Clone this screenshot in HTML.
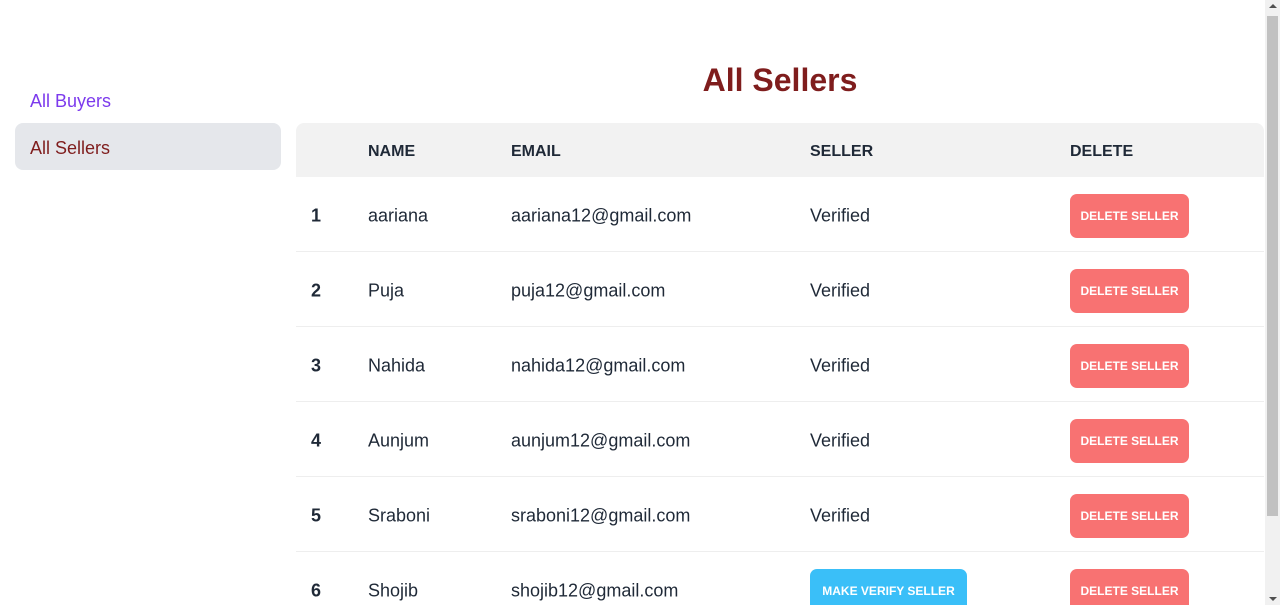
<!DOCTYPE html>
<html><head><style>
*{box-sizing:border-box;margin:0;padding:0}
html,body{width:1280px;height:605px;overflow:hidden}
body{background:#fff;font-family:"Liberation Sans",sans-serif;position:relative;color:#1f2937}
.sb{position:absolute;right:0;top:0;width:15px;height:605px;background:#f1f1f1}
.sb .th{position:absolute;left:2px;top:16px;width:11px;height:500px;background:#c1c1c1}
.sb .up{position:absolute;top:4px;left:4px;border:4px solid transparent;border-bottom:4px solid #505050;border-top:0}
.sb .dn{position:absolute;bottom:4px;left:4px;border:4px solid transparent;border-top:4px solid #505050;border-bottom:0}
.buy{position:absolute;left:30px;top:91px;font-size:18px;color:#7c3aed}
.sel{position:absolute;left:15px;top:123px;width:266px;height:47px;background:#e5e7eb;border-radius:8px;color:#7f1d1d;font-size:18px;padding:15px 15px 0}
h1{position:absolute;left:296px;width:968px;text-align:center;top:62px;font-size:32px;color:#7f1d1d;font-weight:bold}
.tb{position:absolute;left:296px;top:123px;width:968px}
.hd{height:54px;background:#f2f2f2;border-radius:8px 8px 0 0;position:relative;font-weight:bold;font-size:16px}
.r{height:75px;border-bottom:1px solid #eee;position:relative;font-size:18px}
.c{position:absolute;top:calc(50% + 2px);transform:translateY(-50%)}
.n{left:15px;font-weight:bold}
.nm{left:72px}.em{left:215px}.vs{left:514px}.dl{left:774px}
.btn{color:#fff;font-size:12px;font-weight:bold;border-radius:7px;height:44px;line-height:44px;text-align:center}
.del{background:#f87272;width:119px}
.ver{background:#3abff8;width:157px}
</style></head><body>
<div class="buy">All Buyers</div>
<div class="sel">All Sellers</div>
<h1>All Sellers</h1>
<div class="tb">
<div class="hd"><span class="c nm">NAME</span><span class="c em">EMAIL</span><span class="c vs">SELLER</span><span class="c dl">DELETE</span></div>
<div class="r"><span class="c n">1</span><span class="c nm">aariana</span><span class="c em">aariana12@gmail.com</span><span class="c vs">Verified</span><div class="c dl btn del">DELETE SELLER</div></div>
<div class="r"><span class="c n">2</span><span class="c nm">Puja</span><span class="c em">puja12@gmail.com</span><span class="c vs">Verified</span><div class="c dl btn del">DELETE SELLER</div></div>
<div class="r"><span class="c n">3</span><span class="c nm">Nahida</span><span class="c em">nahida12@gmail.com</span><span class="c vs">Verified</span><div class="c dl btn del">DELETE SELLER</div></div>
<div class="r"><span class="c n">4</span><span class="c nm">Aunjum</span><span class="c em">aunjum12@gmail.com</span><span class="c vs">Verified</span><div class="c dl btn del">DELETE SELLER</div></div>
<div class="r"><span class="c n">5</span><span class="c nm">Sraboni</span><span class="c em">sraboni12@gmail.com</span><span class="c vs">Verified</span><div class="c dl btn del">DELETE SELLER</div></div>
<div class="r"><span class="c n">6</span><span class="c nm">Shojib</span><span class="c em">shojib12@gmail.com</span><div class="c vs btn ver">MAKE VERIFY SELLER</div><div class="c dl btn del">DELETE SELLER</div></div>
</div>
<div class="sb"><div class="up"></div><div class="th"></div><div class="dn"></div></div>
</body></html>
